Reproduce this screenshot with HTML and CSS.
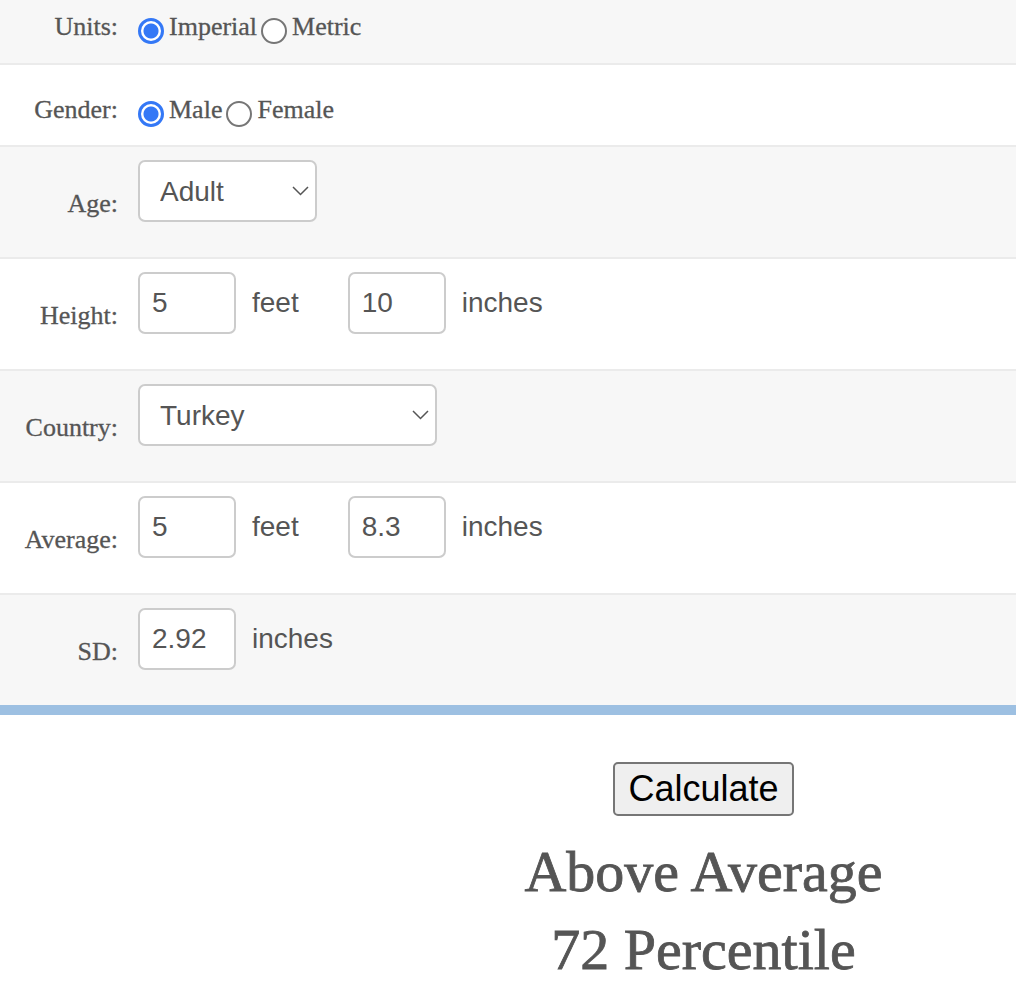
FILE: index.html
```html
<!DOCTYPE html>
<html lang="en">
<head>
    <meta charset="UTF-8">
    <meta name="viewport" content="width=device-width, initial-scale=1.0">
    <title>Height Percentile Calculator</title>
    <link rel="stylesheet" href="styles.css">
</head>
<body>
    <form class="calc" onsubmit="return false">
        <div class="row row-choice row-top">
            <span class="row-label">Units:</span>
            <div class="choices"><label class="choice"><input type="radio" name="units" checked>Imperial</label><label class="choice"><input type="radio" name="units">Metric</label></div>
        </div>

        <div class="row row-choice">
            <span class="row-label">Gender:</span>
            <div class="choices"><label class="choice"><input type="radio" name="gender" checked>Male</label><label class="choice"><input type="radio" name="gender">Female</label></div>
        </div>

        <div class="row">
            <span class="row-label">Age:</span>
            <div class="field">
                <span class="select">
                    <select class="select-age">
                        <option>Adult</option>
                        <option>Child</option>
                    </select>
                    <svg width="17" height="10" viewBox="0 0 17 10"><path d="M1 1 L8.5 8.5 L16 1" /></svg>
                </span>
            </div>
        </div>

        <div class="row">
            <span class="row-label">Height:</span>
            <div class="field">
                <input class="num" type="text" value="5">
                <span class="unit unit-gap">feet</span>
                <input class="num" type="text" value="10">
                <span class="unit">inches</span>
            </div>
        </div>

        <div class="row">
            <span class="row-label">Country:</span>
            <div class="field">
                <span class="select">
                    <select class="select-country">
                        <option>Turkey</option>
                        <option>United States</option>
                    </select>
                    <svg width="17" height="10" viewBox="0 0 17 10"><path d="M1 1 L8.5 8.5 L16 1" /></svg>
                </span>
            </div>
        </div>

        <div class="row">
            <span class="row-label">Average:</span>
            <div class="field">
                <input class="num" type="text" value="5">
                <span class="unit unit-gap">feet</span>
                <input class="num" type="text" value="8.3">
                <span class="unit">inches</span>
            </div>
        </div>

        <div class="row">
            <span class="row-label">SD:</span>
            <div class="field">
                <input class="num" type="text" value="2.92">
                <span class="unit">inches</span>
            </div>
        </div>
    </form>

    <div class="result">
        <button class="calc-btn" type="button">Calculate</button>
        <h2 class="verdict">Above Average<br>72 Percentile</h2>
    </div>
</body>
</html>
```

FILE: styles.css
```css
* {
    margin: 0;
    padding: 0;
    box-sizing: border-box;
}

body {
    font-family: "Liberation Serif", "Times New Roman", serif;
    color: #555;
    background: #fff;
}

.calc {
    border-bottom: 10px solid #9dc0e2;
}

.row {
    display: flex;
    padding: 13px 0 35px;
    border-bottom: 2px solid #ebebeb;
    background: #fff;
}

.row:nth-child(odd) {
    background: #f7f7f7;
}

.row:last-child {
    border-bottom: none;
}

.row-label {
    flex-shrink: 0;
    width: 118px;
    margin-right: 20px;
    margin-bottom: 3px;
    align-self: flex-end;
    text-align: right;
    font-size: 26px;
    -webkit-text-stroke: 0.3px #555;
}

/* radio rows */
.row-choice {
    align-items: baseline;
    height: 82px;
    padding: 30px 0 0;
}

.row-choice .row-label {
    align-self: baseline;
    margin-bottom: 0;
}

.row-top {
    height: 65px;
    padding-top: 12px;
}

.choices {
    font-size: 26px;
    -webkit-text-stroke: 0.3px #555;
}

.choice {
    margin-right: 4px;
    cursor: pointer;
}

.choice input {
    appearance: none;
    -webkit-appearance: none;
    display: inline-block;
    width: 26px;
    height: 26px;
    margin: 0 5px 0 0;
    border: 2px solid #767676;
    border-radius: 50%;
    background: #fff;
    vertical-align: -9px;
}

.choice input:checked {
    border: 3px solid #3478f6;
    background: radial-gradient(circle, #3478f6 0, #3478f6 7px, #fff 8px);
}

/* text fields */
.field {
    display: flex;
    align-items: center;
}

.num,
.select select {
    height: 62px;
    border: 2px solid #ccc;
    border-radius: 7px;
    background: #fff;
    color: #555;
    font-family: "Liberation Sans", Arial, sans-serif;
    font-size: 28px;
}

.num {
    width: 98px;
    padding: 0 12px;
}

.unit {
    margin: 0 16px;
    font-family: "Liberation Sans", Arial, sans-serif;
    font-size: 28px;
}

.unit-gap {
    margin-right: 49px;
}

.select {
    position: relative;
    display: inline-block;
}

.select select {
    appearance: none;
    -webkit-appearance: none;
    padding: 0 40px 0 20px;
}

.select-age {
    width: 179px;
}

.select-country {
    width: 299px;
}

.select svg {
    position: absolute;
    right: 8px;
    top: 50%;
    margin-top: -5px;
    pointer-events: none;
}

.select path {
    fill: none;
    stroke: #555;
    stroke-width: 1.5;
}

/* result */
.result {
    display: flex;
    flex-direction: column;
    align-items: center;
    margin-left: 391px;
    padding-top: 47px;
}

.calc-btn {
    height: 54px;
    padding: 0 13px;
    border: 2px solid #767676;
    border-radius: 5px;
    background: #efefef;
    color: #000;
    font-family: "Liberation Sans", Arial, sans-serif;
    font-size: 36px;
    cursor: pointer;
}

.verdict {
    margin-top: 17px;
    font-size: 58px;
    font-weight: normal;
    line-height: 78px;
    text-align: center;
    -webkit-text-stroke: 0.8px #555;
}
```
